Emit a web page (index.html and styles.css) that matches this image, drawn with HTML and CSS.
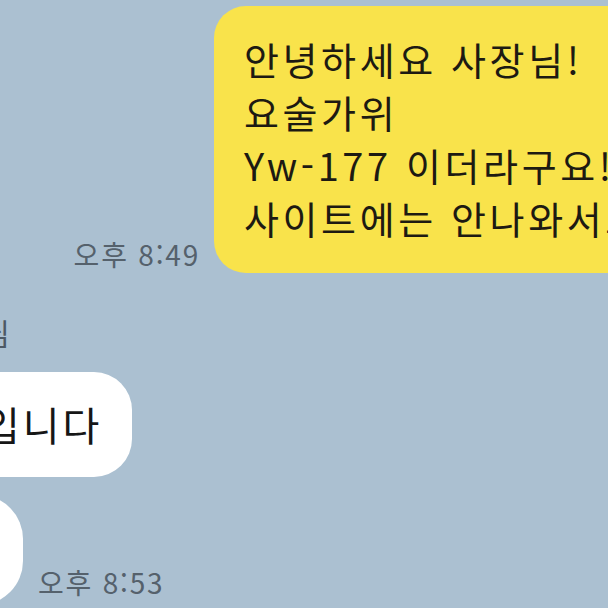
FILE: index.html
```html
<!DOCTYPE html>
<html lang="ko">
<head>
  <meta charset="UTF-8">
  <title>채팅</title>
  <meta name="viewport" content="width=device-width, initial-scale=1.0">
  <link rel="stylesheet" href="styles.css">
</head>
<body>
  <div class="chat">
    <div class="row mine">
      <span class="time">오후 8:49</span>
      <div class="bubble yellow">
        안녕하세요 사장님!<br>
        요술가위<br>
        Yw-177 이더라구요!!<br>
        사이트에는 안나와서요
      </div>
    </div>

    <div class="name">사장님</div>

    <div class="row theirs first">
      <div class="bubble white">입니다</div>
    </div>

    <div class="row theirs second">
      <div class="bubble white tail">네</div>
      <span class="time late">오후 8:53</span>
    </div>
  </div>
</body>
</html>
```

FILE: styles.css
```css
:root {
  --bg-color: #abc0d1;
  --yellow: #f9e34b;
  --text-color: #1d1a12;
  --time-color: #55616c;
}

* {
  box-sizing: border-box;
}

html, body {
  margin: 0;
  height: 100%;
  overflow: hidden;
}

body {
  background-color: var(--bg-color);
  font-family: "Noto Sans CJK KR", "Noto Sans", sans-serif;
  color: var(--text-color);
}

.chat {
  padding-top: 6px;
  display: flex;
  flex-direction: column;
}

.row {
  display: flex;
  align-items: flex-end;
  gap: 14px;
}

.row.mine {
  justify-content: flex-end;
  margin-right: -126px;
}

.bubble {
  white-space: nowrap;
}

.bubble.yellow {
  background: var(--yellow);
  font-size: 38px;
  line-height: 53px;
  letter-spacing: 3.6px;
  padding: 26px 30px 29px 30px;
  width: 520px;
  border-radius: 32px;
  overflow: hidden;
}

.time {
  font-size: 28px;
  line-height: 34px;
  letter-spacing: 1.8px;
  color: var(--time-color);
  white-space: nowrap;
  margin-bottom: 2px;
}

.time.late {
  margin-bottom: 6px;
}

.name {
  font-size: 30px;
  line-height: 36px;
  color: #4d5965;
  margin: 41px 0 0 -73px;
  white-space: nowrap;
}

.row.theirs.first {
  margin-top: 22px;
}

.bubble.white {
  background: #fff;
  color: #161616;
  font-size: 40px;
  line-height: 53px;
  letter-spacing: 3px;
  padding: 26px 30px 26px 30px;
  margin-left: -47px;
  border-radius: 38px;
}

.row.theirs.second {
  margin-top: 18px;
  gap: 15px;
}

.bubble.tail {
  height: 110px;
  width: 110px;
  margin-left: -87px;
  border-radius: 44px;
}
```
